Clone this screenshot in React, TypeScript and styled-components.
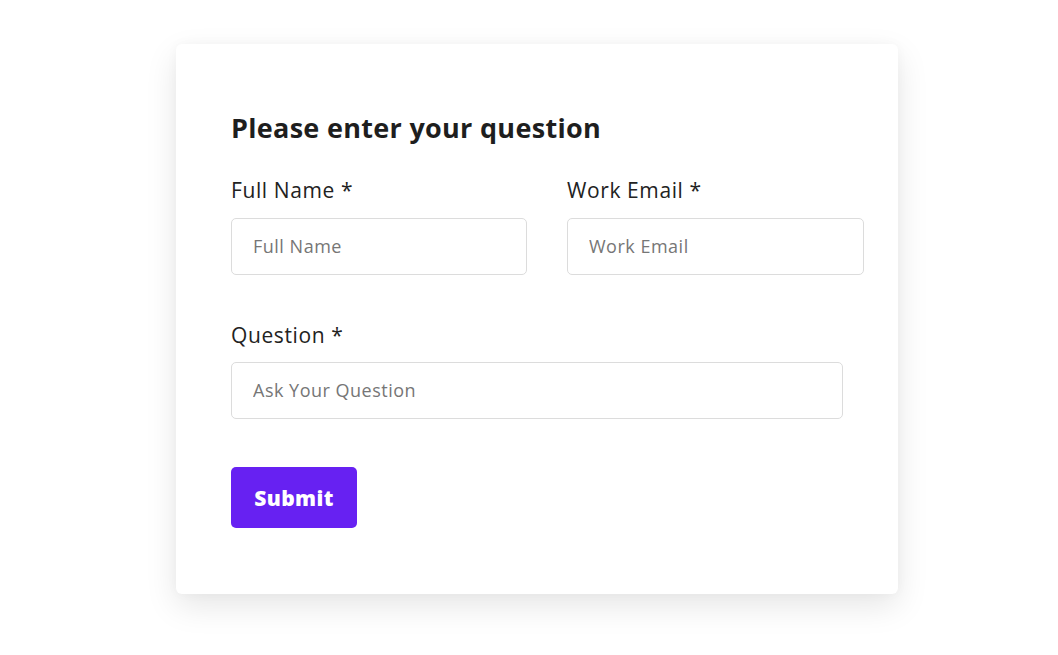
import React from "react";
import styled, { createGlobalStyle } from "styled-components";

const Global = createGlobalStyle`
  html, body { margin: 0; padding: 0; background: #ffffff; }
  body { font-family: "Open Sans", "Inter", sans-serif; }
  * { box-sizing: border-box; }
`;

const Page = styled.div`
  width: 1058px;
  min-height: 655px;
  padding: 44px 0 0 176px;
`;

const Card = styled.form`
  width: 722px;
  height: 550px;
  background: #ffffff;
  border-radius: 6px;
  box-shadow: 0 12px 32px rgba(0, 0, 0, 0.1), 0 0 12px rgba(0, 0, 0, 0.03);
  padding: 66px 0 0 55px;
  display: flex;
  flex-direction: column;
`;

const Heading = styled.h2`
  margin: 0;
  font-size: 27px;
  line-height: 36px;
  font-weight: 700;
  color: #1e1e1e;
  letter-spacing: 0.3px;
`;

const Row = styled.div`
  display: grid;
  grid-template-columns: 296px 297px;
  column-gap: 40px;
  margin-top: 29px;
`;

const Field = styled.div`
  display: flex;
  flex-direction: column;
`;

const Label = styled.label`
  font-size: 21px;
  line-height: 30px;
  font-weight: 400;
  color: #222222;
  letter-spacing: 0.6px;
  margin-bottom: 13px;
`;

const Input = styled.input<{ $width?: number }>`
  width: ${(p) => (p.$width ? `${p.$width}px` : "100%")};
  height: 57px;
  border: 1px solid #dcdcdc;
  border-radius: 5px;
  padding: 0 21px 1px;
  font-family: inherit;
  font-size: 18px;
  letter-spacing: 0.5px;
  color: #333;
  background: #fff;
  outline: none;
  &::placeholder { color: #767676; }
`;

const QuestionField = styled(Field)`
  margin-top: 45px;
  & > label { margin-bottom: 12px; }
`;

const SubmitButton = styled.button`
  margin-top: 48px;
  width: 126px;
  height: 61px;
  border: none;
  border-radius: 5px;
  background: #6721f2;
  color: #ffffff;
  font-family: inherit;
  font-size: 21px;
  font-weight: 800;
  letter-spacing: 0.4px;
  cursor: pointer;
  padding: 0;
`;

export default function App() {
  return (
    <>
      <Global />
      <Page>
        <Card onSubmit={(e) => e.preventDefault()}>
          <Heading>Please enter your question</Heading>
          <Row>
            <Field>
              <Label>Full Name *</Label>
              <Input placeholder="Full Name" />
            </Field>
            <Field>
              <Label>Work Email *</Label>
              <Input placeholder="Work Email" />
            </Field>
          </Row>
          <QuestionField>
            <Label>Question *</Label>
            <Input $width={612} placeholder="Ask Your Question" />
          </QuestionField>
          <div>
            <SubmitButton type="submit">Submit</SubmitButton>
          </div>
        </Card>
      </Page>
    </>
  );
}
